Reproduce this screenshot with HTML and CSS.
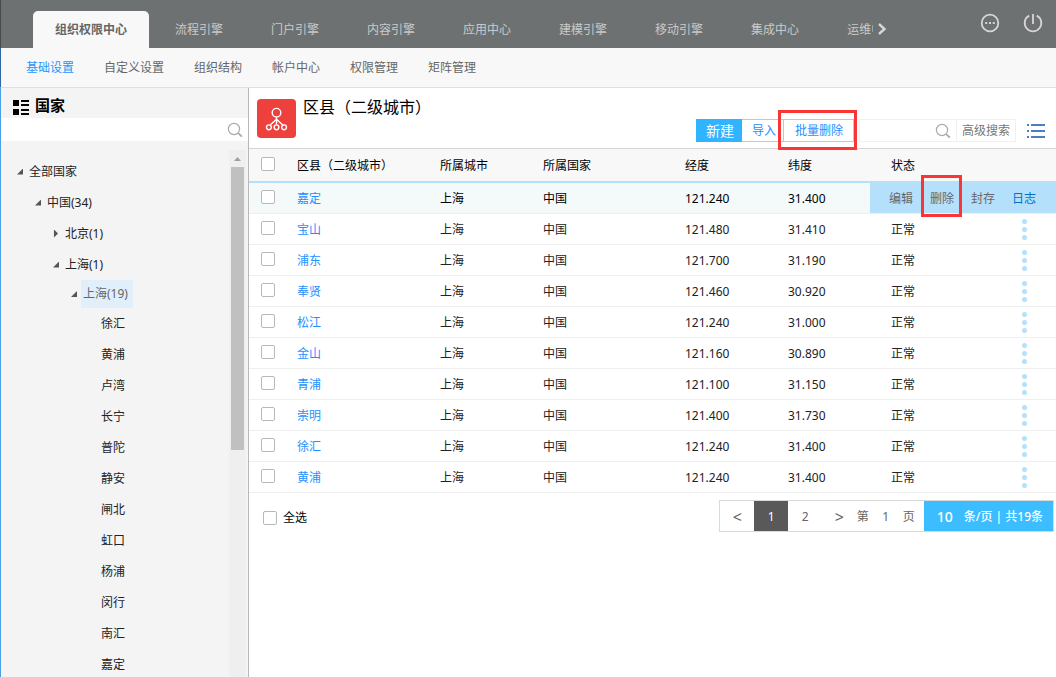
FILE: index.html
```html
<!DOCTYPE html>
<html lang="zh-CN">
<head>
<meta charset="utf-8">
<title>组织权限中心</title>
<link rel="stylesheet" href="styles.css">
</head>
<body>
<header class="topbar">
  <nav class="modules">
    <a class="module active" href="#">组织权限中心</a>
    <a class="module" href="#">流程引擎</a>
    <a class="module" href="#">门户引擎</a>
    <a class="module" href="#">内容引擎</a>
    <a class="module" href="#">应用中心</a>
    <a class="module" href="#">建模引擎</a>
    <a class="module" href="#">移动引擎</a>
    <a class="module" href="#">集成中心</a>
    <a class="module" href="#">运维中心</a>
  </nav>
  <button class="icon-btn next" aria-label="更多模块"><svg width="10" height="14" viewBox="0 0 10 14" fill="none" stroke="#d6d6d6" stroke-width="2.4"><path d="M2 2l5.5 5L2 12"/></svg></button>
  <div class="tools">
    <button class="icon-btn" aria-label="更多"><svg width="20" height="20" viewBox="0 0 20 20" fill="none" stroke="#d6d6d6" stroke-width="1.8"><circle cx="10" cy="10" r="8.3"/><path d="M5.2 10h2M9 10h2M12.8 10h2" stroke-width="2"/></svg></button>
    <button class="icon-btn" aria-label="退出"><svg width="20" height="20" viewBox="0 0 20 20" fill="none" stroke="#d6d6d6" stroke-width="1.8"><path d="M6.2 2.6a8.3 8.3 0 1 0 7.6 0M10 1v10"/></svg></button>
  </div>
</header>
<nav class="subnav">
  <a class="active" href="#">基础设置</a>
  <a href="#">自定义设置</a>
  <a href="#">组织结构</a>
  <a href="#">帐户中心</a>
  <a href="#">权限管理</a>
  <a href="#">矩阵管理</a>
</nav>
<div class="workspace">
  <aside class="sidebar">
    <h2 class="side-title"><svg width="16" height="15" viewBox="0 0 16 15" fill="#000"><path d="M0 0h6v6H0zM0 9h6v6H0zM8 0h8v2H8zM8 4h8v2H8zM8 9h8v2H8zM8 13h8v2H8z"/></svg>国家</h2>
    <div class="side-search">
      <input type="text" aria-label="搜索国家">
      <svg width="16" height="16" viewBox="0 0 16 16" fill="none" stroke="#aaa"><circle cx="7" cy="7" r="5.6" stroke-width="1.2"/><path d="M11.2 11.2l3.6 3.4" stroke-width="1.8"/></svg>
    </div>
    <div class="tree-area">
      <ul class="tree">
        <li class="lv1"><i class="open"></i><span>全部国家</span></li>
        <li class="lv2"><i class="open"></i><span>中国(34)</span></li>
        <li class="lv3"><i class="closed"></i><span>北京(1)</span></li>
        <li class="lv3"><i class="open"></i><span>上海(1)</span></li>
        <li class="lv4"><i class="open"></i><span class="selected">上海(19)</span></li>
        <li class="leaf">徐汇</li>
        <li class="leaf">黄浦</li>
        <li class="leaf">卢湾</li>
        <li class="leaf">长宁</li>
        <li class="leaf">普陀</li>
        <li class="leaf">静安</li>
        <li class="leaf">闸北</li>
        <li class="leaf">虹口</li>
        <li class="leaf">杨浦</li>
        <li class="leaf">闵行</li>
        <li class="leaf">南汇</li>
        <li class="leaf">嘉定</li>
      </ul>
      <div class="scrollbar"><i class="arrow"></i><i class="thumb"></i></div>
    </div>
  </aside>
  <main class="content">
    <div class="page-head">
      <svg class="page-icon" width="39" height="39" viewBox="0 0 39 39" fill="none" stroke="#fff" stroke-width="1.4"><rect width="39" height="39" rx="4" fill="#ee403d" stroke="none"/><circle cx="19.5" cy="13.7" r="4.3"/><path d="M19.5 18v7.6M19.5 20.3l-6.3 5.8M19.5 20.3l6.3 5.8"/><circle cx="11.9" cy="28.3" r="2.4"/><circle cx="19.5" cy="28.3" r="2.4"/><circle cx="27.1" cy="28.3" r="2.4"/></svg>
      <h1>区县<span class="paren">（</span>二级城市<span class="paren">）</span></h1>
      <div class="toolbar">
        <button class="btn primary">新建</button>
        <button class="btn import">导入</button>
        <button class="btn batch marked">批量删除</button>
        <div class="search">
          <input type="text" aria-label="搜索">
          <svg width="16" height="16" viewBox="0 0 16 16" fill="none" stroke="#aaa"><circle cx="7" cy="7" r="5.6" stroke-width="1.2"/><path d="M11.2 11.2l3.6 3.4" stroke-width="1.8"/></svg>
          <button class="advanced">高级搜索</button>
        </div>
        <button class="icon-btn list" aria-label="列表"><svg width="18" height="14" viewBox="0 0 18 14" fill="#4a7fc1"><path d="M0 0h2v2H0zM4 0h14v2H4zM0 6h2v2H0zM4 6h14v2H4zM0 12h2v2H0zM4 12h14v2H4z"/></svg></button>
      </div>
    </div>
    <table class="grid">
      <colgroup><col class="c-check"><col class="c-name"><col class="c-std"><col class="c-country"><col class="c-std"><col class="c-std"><col class="c-std"><col class="c-more"></colgroup>
      <thead>
        <tr><th><input type="checkbox" aria-label="选择全部"></th><th>区县<span class="paren">（</span>二级城市<span class="paren">）</span></th><th>所属城市</th><th>所属国家</th><th>经度</th><th>纬度</th><th>状态</th><th></th></tr>
      </thead>
      <tbody>
        <tr class="hover"><td><input type="checkbox" aria-label="嘉定"></td><td><a href="#">嘉定</a></td><td>上海</td><td>中国</td><td>121.240</td><td>31.400</td><td></td><td class="more"><div class="row-actions"><button>编辑</button><button class="marked">删除</button><button>封存</button><button class="log">日志</button></div></td></tr>
        <tr><td><input type="checkbox" aria-label="宝山"></td><td><a href="#">宝山</a></td><td>上海</td><td>中国</td><td>121.480</td><td>31.410</td><td>正常</td><td class="more"><button class="dots" aria-label="操作"><i></i><i></i><i></i></button></td></tr>
        <tr><td><input type="checkbox" aria-label="浦东"></td><td><a href="#">浦东</a></td><td>上海</td><td>中国</td><td>121.700</td><td>31.190</td><td>正常</td><td class="more"><button class="dots" aria-label="操作"><i></i><i></i><i></i></button></td></tr>
        <tr><td><input type="checkbox" aria-label="奉贤"></td><td><a href="#">奉贤</a></td><td>上海</td><td>中国</td><td>121.460</td><td>30.920</td><td>正常</td><td class="more"><button class="dots" aria-label="操作"><i></i><i></i><i></i></button></td></tr>
        <tr><td><input type="checkbox" aria-label="松江"></td><td><a href="#">松江</a></td><td>上海</td><td>中国</td><td>121.240</td><td>31.000</td><td>正常</td><td class="more"><button class="dots" aria-label="操作"><i></i><i></i><i></i></button></td></tr>
        <tr><td><input type="checkbox" aria-label="金山"></td><td><a href="#">金山</a></td><td>上海</td><td>中国</td><td>121.160</td><td>30.890</td><td>正常</td><td class="more"><button class="dots" aria-label="操作"><i></i><i></i><i></i></button></td></tr>
        <tr><td><input type="checkbox" aria-label="青浦"></td><td><a href="#">青浦</a></td><td>上海</td><td>中国</td><td>121.100</td><td>31.150</td><td>正常</td><td class="more"><button class="dots" aria-label="操作"><i></i><i></i><i></i></button></td></tr>
        <tr><td><input type="checkbox" aria-label="崇明"></td><td><a href="#">崇明</a></td><td>上海</td><td>中国</td><td>121.400</td><td>31.730</td><td>正常</td><td class="more"><button class="dots" aria-label="操作"><i></i><i></i><i></i></button></td></tr>
        <tr><td><input type="checkbox" aria-label="徐汇"></td><td><a href="#">徐汇</a></td><td>上海</td><td>中国</td><td>121.240</td><td>31.400</td><td>正常</td><td class="more"><button class="dots" aria-label="操作"><i></i><i></i><i></i></button></td></tr>
        <tr><td><input type="checkbox" aria-label="黄浦"></td><td><a href="#">黄浦</a></td><td>上海</td><td>中国</td><td>121.240</td><td>31.400</td><td>正常</td><td class="more"><button class="dots" aria-label="操作"><i></i><i></i><i></i></button></td></tr>
      </tbody>
    </table>
    <div class="table-foot">
      <label class="select-all"><input type="checkbox">全选</label>
      <div class="pager">
        <button class="step">&lt;</button>
        <button class="current">1</button>
        <button>2</button>
        <button class="step">&gt;</button>
        <label class="goto">第<input type="text" value="1">页</label>
        <label class="size"><input type="text" value="10">条/页 | 共19条</label>
      </div>
    </div>
  </main>
</div>
</body>
</html>
```
FILE: styles.css
```css
* { box-sizing: border-box; }
body {
  margin: 0;
  height: 100vh;
  display: flex;
  flex-direction: column;
  overflow: hidden;
  font: 12px/18px "Noto Sans", "Noto Sans CJK SC", sans-serif;
  color: #222;
  background: #fff;
}
button, input { font: inherit; color: inherit; margin: 0; padding: 0; border: 0; background: none; border-radius: 0; }
button { cursor: pointer; }
input { outline: 0; min-width: 0; }
a { text-decoration: none; color: inherit; }
svg { display: block; flex: none; }
h1, h2, ul { margin: 0; padding: 0; }
ul { list-style: none; }

input[type="checkbox"] {
  appearance: none;
  display: block;
  width: 14px;
  height: 14px;
  border: 1px solid #b8b8b8;
  border-radius: 2px;
  background: #fff;
}
.icon-btn { display: flex; align-items: center; justify-content: center; }
/* centred full-width brackets */
.paren { font-family: "Noto Sans CJK TC", sans-serif; line-height: 1; }

.topbar {
  flex: none;
  display: flex;
  align-items: stretch;
  height: 48px;
  padding: 0 13px 0 32px;
  border-left: 1px solid #4a4a4a;
  background: #6d7172;
}
.modules { display: flex; align-items: flex-end; gap: 2px; width: 840px; min-width: 0; overflow: hidden; }
.module {
  flex: none;
  margin-right: -2px;
  padding: 0 24px;
  line-height: 37px;
  color: #c9cbcb;
  white-space: nowrap;
}
.module.active {
  margin-right: 0;
  padding: 0 22px;
  border-radius: 5px 5px 0 0;
  background: #f8f8f8;
  color: #666;
  font-weight: bold;
}
.next { align-self: flex-end; height: 38px; margin-left: 4px; }
.tools { display: flex; align-items: flex-start; gap: 23px; margin-left: auto; padding-top: 13px; }

.subnav {
  flex: none;
  display: flex;
  gap: 30px;
  height: 40px;
  padding-left: 25px;
  border-left: 1px solid #2f68a8;
  border-bottom: 1px solid #e0e0e0;
  background: #f8f8f8;
  line-height: 39px;
  color: #666;
}
.subnav .active { color: #2a94fb; }

.workspace { flex: 1; display: flex; min-height: 0; }
.sidebar {
  flex: none;
  display: flex;
  flex-direction: column;
  width: 249px;
  border-left: 1px solid #4c9fe6;
  border-right: 1px solid #b8b8b8;
  background: #f4f4f4;
}
.side-title {
  display: flex;
  align-items: center;
  gap: 6px;
  height: 30px;
  padding: 4px 0 0 12px;
  font-size: 15px;
  line-height: 26px;
  color: #000;
}
.side-title svg { margin-top: 5px; }
.side-search { display: flex; align-items: center; height: 23px; padding-right: 5px; background: #fff; }
.side-search input { flex: 1; height: 23px; padding-left: 8px; }
.tree-area { flex: 1; display: flex; min-height: 0; padding-top: 9px; overflow: hidden; }
.tree { flex: 1; padding-top: 6px; }
.tree li { display: flex; align-items: center; height: 31px; }
.tree i { flex: none; width: 6px; height: 6px; margin-right: 4px; background: #555; }
.tree .open { clip-path: polygon(100% 0, 100% 100%, 0 100%); }
.tree .closed { height: 8px; clip-path: polygon(16% 0, 84% 50%, 16% 100%); }
.tree span { padding: 0 2px; }
.tree .lv1 { padding-left: 16px; }
.tree .lv2 { padding-left: 34px; }
.tree .lv3 { padding-left: 52px; }
.tree .lv4 { height: 28px; padding-left: 70px; }
.tree .leaf { padding-left: 100px; }
.tree .selected { padding: 0 5px 0 2px; line-height: 28px; background: #e1effb; color: #666; }
.scrollbar { width: 17px; margin-right: 2px; padding: 7px 2px 0; background: #efefef; }
.scrollbar .arrow { display: block; height: 4px; margin: 0 3px 6px; background: #a0a0a0; clip-path: polygon(50% 0, 100% 100%, 0 100%); }
.scrollbar .thumb { display: block; height: 283px; background: #c0c0c0; }

.content { flex: 1; min-width: 0; }
.page-head {
  display: flex;
  align-items: flex-start;
  height: 61px;
  padding-left: 8px;
  border-bottom: 1px solid #d5d5d5;
}
.page-icon { margin-top: 11px; }
.page-head h1 { margin: 7px 0 0 7px; font-size: 16px; line-height: 24px; font-weight: normal; color: #000; white-space: nowrap; }
.toolbar { display: flex; margin: 31px 11px 0 auto; }
.btn { height: 23px; border: 1px solid #a8cdf3; border-left: 0; color: #1e90ff; background: #fff; }
.btn.primary { width: 46px; padding-left: 2px; border: 0; background: #30b4ff; color: #fff; font-size: 14px; }
.btn.import { width: 42px; padding-left: 3px; }
.btn.batch { width: 70px; padding-left: 1px; }
.marked { position: relative; }
.marked::after { content: ""; position: absolute; border: 3px solid #f93636; pointer-events: none; }
.batch::after { inset: -10px -4px -9px -6px; }
.search { display: flex; align-items: center; height: 23px; margin-left: 5px; border: 1px solid #f0f0f0; }
.search input { width: 75px; padding-left: 6px; }
.advanced { height: 21px; margin-left: 5px; padding: 0 5px; border-left: 1px solid #f0f0f0; color: #777; }
.list { margin-left: 11px; }

.grid { width: 100%; table-layout: fixed; border-collapse: separate; border-spacing: 0; }
.c-check { width: 48px; }
.c-name { width: 143px; }
.c-std { width: 103px; }
.c-country { width: 142px; }
.c-more { width: 62px; }
.grid th, .grid td { padding: 2px 0 0; text-align: left; font-weight: normal; white-space: nowrap; }
.grid th { height: 34px; border-bottom: 2px solid #b5e0fc; background: #f8f8f8; color: #000; }
.grid td { height: 31px; border-bottom: 1px solid #efefef; }
.grid input { margin: 0 0 4px 12px; }
.grid a { color: #1e90ff; }
.grid .hover td { background: #f4fafa; color: #000; }
.grid .more { position: relative; padding: 0 2px 0 0; }
.dots { display: flex; flex-direction: column; align-items: center; gap: 3px; margin: 0 auto; }
.dots i { width: 5px; height: 5px; border-radius: 50%; background: #b5e0fc; }
.row-actions {
  position: absolute;
  inset: 0 0 0 auto;
  display: flex;
  align-items: center;
  gap: 17px;
  padding: 2px 20px 0 19px;
  background: #b5e0fc;
  color: #666;
}
.row-actions .marked::after { inset: -15px -8px -9px -9px; }
.row-actions .log { color: #0070cc; }

.table-foot { display: flex; justify-content: space-between; padding: 7px 2px 0 14px; }
.select-all { display: flex; align-items: center; gap: 6px; height: 35px; color: #000; }
.pager { display: flex; height: 32px; border: 1px solid #dadada; color: #666; }
.pager button { width: 34px; padding: 2px 0 0 1px; }
.pager .step { font-size: 16px; }
.pager .current { background: #595959; color: #fff; }
.goto { display: flex; align-items: center; padding: 2px 0 0 1px; }
.goto input { width: 34px; text-align: center; }
.size { display: flex; align-items: center; margin-left: 9px; padding: 2px 10px 0 13px; background: #3bbdff; color: #fff; white-space: nowrap; font-weight: 500; }
.size input { width: 27px; font-size: 14px; }
```
